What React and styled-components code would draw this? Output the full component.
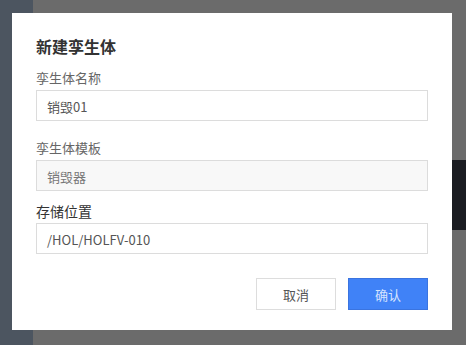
import React from 'react';
import styled, { createGlobalStyle } from 'styled-components';

const GlobalStyle = createGlobalStyle`
  html, body {
    margin: 0;
    padding: 0;
    height: 100%;
  }
  body {
    font-family: 'Noto Sans CJK SC', 'Noto Sans', sans-serif;
    background:
      linear-gradient(180deg, transparent 0 160px, #1b1d22 160px 230px, transparent 230px) right / 14px 100% no-repeat,
      linear-gradient(90deg, #4c5560 0 33px, #6b6b6b 33px);
  }
`;

const Scene = styled.div`
  width: 466px;
  height: 345px;
  box-sizing: border-box;
  padding: 13px 14px 15px 12px;
`;

const Dialog = styled.div`
  width: 440px;
  height: 317px;
  box-sizing: border-box;
  background: #ffffff;
  padding: 22px 24px 18px 24px;
  display: flex;
  flex-direction: column;
`;

const Title = styled.h2`
  margin: 0;
  font-size: 16px;
  line-height: 22px;
  font-weight: 700;
  color: #333333;
`;

const Field = styled.div`
  display: flex;
  flex-direction: column;
  margin-top: ${(p) => p.$top}px;
`;

const Label = styled.label`
  font-size: ${(p) => (p.$strong ? 14 : 13)}px;
  line-height: 20px;
  color: ${(p) => (p.$strong ? '#333333' : '#666666')};
  margin-bottom: 2px;
`;

const Input = styled.div`
  height: 31px;
  box-sizing: border-box;
  border: 1px solid #dcdcdc;
  background: ${(p) => (p.$disabled ? '#f8f8f8' : '#ffffff')};
  padding: 2px 10px 0;
  display: flex;
  align-items: center;
  font-size: 13px;
  color: ${(p) => (p.$disabled ? '#777777' : '#555555')};
`;

const Footer = styled.div`
  display: flex;
  justify-content: flex-end;
  gap: 12px;
  margin-top: 24px;
`;

const Button = styled.button`
  width: 80px;
  height: 32px;
  box-sizing: border-box;
  font-family: inherit;
  font-size: 13px;
  cursor: pointer;
  border: 1px solid ${(p) => (p.$primary ? '#3a74e0' : '#dddddd')};
  background: ${(p) => (p.$primary ? '#4082f7' : '#ffffff')};
  color: ${(p) => (p.$primary ? '#d6e4ff' : '#555555')};
`;

const App = () => (
  <>
    <GlobalStyle />
    <Scene>
      <Dialog>
        <Title>新建孪生体</Title>
        <Field $top={11}>
          <Label>孪生体名称</Label>
          <Input>销毁01</Input>
        </Field>
        <Field $top={17}>
          <Label>孪生体模板</Label>
          <Input $disabled>销毁器</Input>
        </Field>
        <Field $top={10}>
          <Label $strong>存储位置</Label>
          <Input>/HOL/HOLFV-010</Input>
        </Field>
        <Footer>
          <Button>取消</Button>
          <Button $primary>确认</Button>
        </Footer>
      </Dialog>
    </Scene>
  </>
);

export default App;
